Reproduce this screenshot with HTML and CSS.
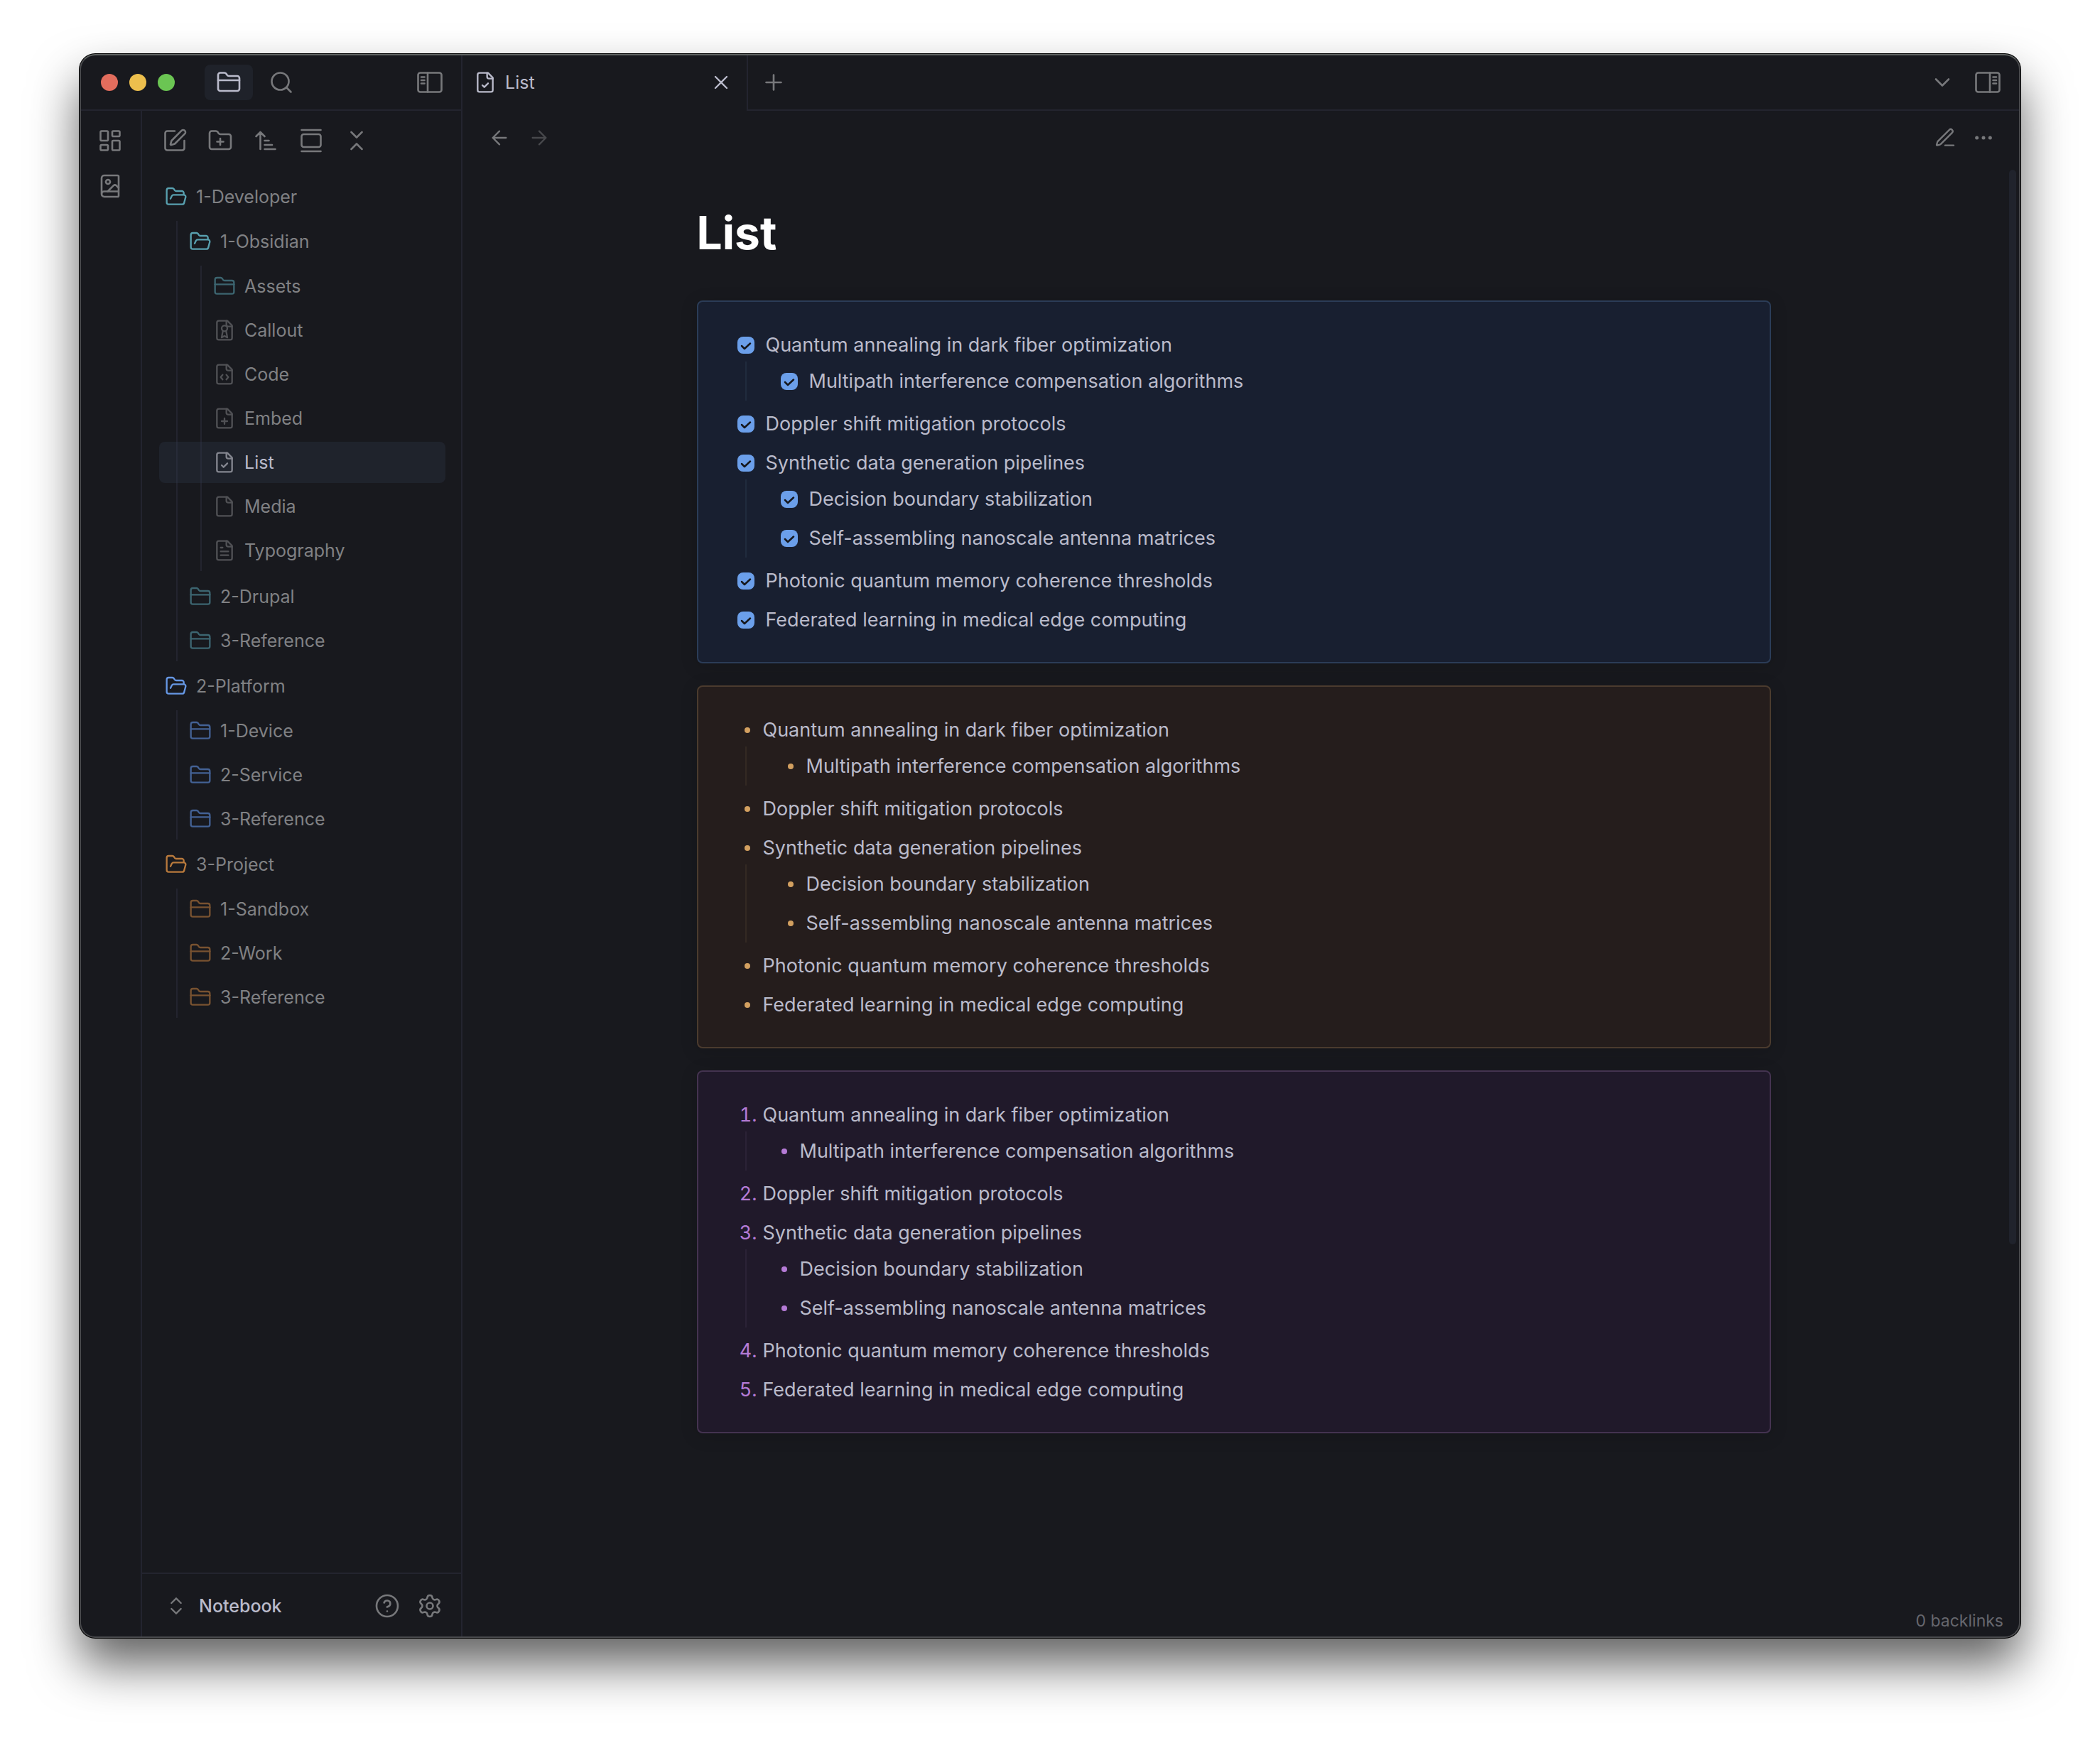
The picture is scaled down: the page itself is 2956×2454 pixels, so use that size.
FILE: index.html
```html
<!DOCTYPE html>
<html lang="en">
<head>
<meta charset="utf-8">
<meta name="viewport" content="width=device-width, initial-scale=1">
<title>List - Notebook</title>
<link rel="stylesheet" href="styles.css">
</head>
<body>
<svg class="sprite" aria-hidden="true">
  <symbol id="folder" viewBox="0 0 24 24"><path d="M20 20a2 2 0 0 0 2-2V8a2 2 0 0 0-2-2h-7.900a2 2 0 0 1-1.690-.900L9.600 3.900A2 2 0 0 0 7.930 3H4a2 2 0 0 0-2 2v13a2 2 0 0 0 2 2Z"/><path d="M2 10h20"/></symbol>
  <symbol id="folder-open" viewBox="0 0 24 24"><path d="m6 14 1.450-2.900A2 2 0 0 1 9.240 10H20a2 2 0 0 1 1.940 2.500l-1.550 6a2 2 0 0 1-1.940 1.500H4a2 2 0 0 1-2-2V5c0-1.100.900-2 2-2h3.930a2 2 0 0 1 1.660.900l.820 1.200a2 2 0 0 0 1.660.900H18a2 2 0 0 1 2 2v2"/></symbol>
  <symbol id="folder-plus" viewBox="0 0 24 24"><path d="M20 20a2 2 0 0 0 2-2V8a2 2 0 0 0-2-2h-7.900a2 2 0 0 1-1.690-.900L9.600 3.900A2 2 0 0 0 7.930 3H4a2 2 0 0 0-2 2v13a2 2 0 0 0 2 2Z"/><path d="M12 10v6M9 13h6"/></symbol>
  <symbol id="search" viewBox="0 0 24 24"><circle cx="11" cy="11" r="8"/><path d="m21 21-4.300-4.300"/></symbol>
  <symbol id="panel-left" viewBox="0 0 24 24"><rect x="1" y="3" width="22" height="18" rx="2"/><path d="M10 3v18M4 7h3M4 10h3M4 13h3"/></symbol>
  <symbol id="panel-right" viewBox="0 0 24 24"><rect x="1" y="3" width="22" height="18" rx="2"/><path d="M14 3v18M17 7h3M17 10h3M17 13h3"/></symbol>
  <symbol id="dashboard" viewBox="0 0 24 24"><rect width="7" height="9" x="3" y="3" rx="1"/><rect width="7" height="5" x="14" y="3" rx="1"/><rect width="7" height="9" x="14" y="12" rx="1"/><rect width="7" height="5" x="3" y="16" rx="1"/></symbol>
  <symbol id="book-image" viewBox="0 0 24 24"><path d="m20 13.700-2.100-2.100a2 2 0 0 0-2.800 0L9.700 17"/><path d="M4 19.500v-15A2.500 2.500 0 0 1 6.500 2H19a1 1 0 0 1 1 1v18a1 1 0 0 1-1 1H6.500a1 1 0 0 1 0-5H20"/><circle cx="10" cy="8" r="2"/></symbol>
  <symbol id="edit" viewBox="0 0 24 24"><path d="M12 3H5a2 2 0 0 0-2 2v14a2 2 0 0 0 2 2h14a2 2 0 0 0 2-2v-7"/><path d="M18.375 2.625a1 1 0 0 1 3 3l-9.013 9.014a2 2 0 0 1-.853.505l-2.873.840a.500.500 0 0 1-.620-.620l.840-2.873a2 2 0 0 1 .506-.852z"/></symbol>
  <symbol id="sort" viewBox="0 0 24 24"><path d="m3 8 4-4 4 4M7 4v16M11 12h4M11 16h7M11 20h10"/></symbol>
  <symbol id="gallery" viewBox="0 0 24 24"><path d="M3 2h18M3 22h18"/><rect width="18" height="12" x="3" y="6" rx="2"/></symbol>
  <symbol id="collapse" viewBox="0 0 24 24"><path d="m7 20 5-5 5 5M7 4l5 5 5-5"/></symbol>
  <symbol id="up-down" viewBox="0 0 24 24"><path d="m7 15 5 5 5-5M7 9l5-5 5 5"/></symbol>
  <symbol id="help" viewBox="0 0 24 24"><circle cx="12" cy="12" r="10"/><path d="M9.090 9a3 3 0 0 1 5.830 1c0 2-3 3-3 3M12 17h.010"/></symbol>
  <symbol id="gear" viewBox="0 0 24 24"><path d="M9.671 4.136a2.340 2.340 0 0 1 4.659 0 2.340 2.340 0 0 0 3.319 1.915 2.340 2.340 0 0 1 2.330 4.033 2.340 2.340 0 0 0 0 3.831 2.340 2.340 0 0 1-2.330 4.033 2.340 2.340 0 0 0-3.319 1.915 2.340 2.340 0 0 1-4.659 0 2.340 2.340 0 0 0-3.320-1.915 2.340 2.340 0 0 1-2.330-4.033 2.340 2.340 0 0 0 0-3.831A2.340 2.340 0 0 1 6.350 6.051a2.340 2.340 0 0 0 3.319-1.915"/><circle cx="12" cy="12" r="3"/></symbol>
  <symbol id="file" viewBox="0 0 24 24"><path d="M15 2H6a2 2 0 0 0-2 2v16a2 2 0 0 0 2 2h12a2 2 0 0 0 2-2V7Z"/><path d="M14 2v4a2 2 0 0 0 2 2h4"/></symbol>
  <symbol id="file-check" viewBox="0 0 24 24"><use href="#file"/><path d="m9 15 2 2 4-4"/></symbol>
  <symbol id="file-badge" viewBox="0 0 24 24"><use href="#file"/><circle cx="12" cy="10" r="3"/><path d="m10.300 12.600-1.300 7 3-1.600 3 1.600-1.300-7"/></symbol>
  <symbol id="file-code" viewBox="0 0 24 24"><use href="#file"/><path d="M10 12.500 8 15l2 2.500M14 12.500l2 2.500-2 2.500"/></symbol>
  <symbol id="file-plus" viewBox="0 0 24 24"><use href="#file"/><path d="M9 15h6M12 18v-6"/></symbol>
  <symbol id="file-text" viewBox="0 0 24 24"><use href="#file"/><path d="M10 9H8M16 13H8M16 17H8"/></symbol>
  <symbol id="close" viewBox="0 0 24 24"><path d="M18 6 6 18M6 6l12 12"/></symbol>
  <symbol id="plus" viewBox="0 0 24 24"><path d="M5 12h14M12 5v14"/></symbol>
  <symbol id="chevron-down" viewBox="0 0 24 24"><path d="m6 9 6 6 6-6"/></symbol>
  <symbol id="arrow-left" viewBox="0 0 24 24"><path d="m12 19-7-7 7-7M19 12H5"/></symbol>
  <symbol id="arrow-right" viewBox="0 0 24 24"><path d="M5 12h14M12 5l7 7-7 7"/></symbol>
  <symbol id="pen-line" viewBox="0 0 24 24"><path d="M12 20h9"/><path d="M16.376 3.622a1 1 0 0 1 3.002 3.002L7.368 18.635a2 2 0 0 1-.855.506l-2.872.838a.500.500 0 0 1-.620-.620l.838-2.872a2 2 0 0 1 .506-.854z"/></symbol>
  <symbol id="more" viewBox="0 0 24 24"><circle cx="12" cy="12" r="1"/><circle cx="19" cy="12" r="1"/><circle cx="5" cy="12" r="1"/></symbol>
</svg>

<div class="window">
  <aside class="sidebar">
    <header class="sidebar-head">
      <div class="lights"><span class="light red"></span><span class="light yellow"></span><span class="light green"></span></div>
      <button class="side-tab active" aria-label="Files"><svg class="icon"><use href="#folder"/></svg></button>
      <button class="side-tab" aria-label="Search"><svg class="icon"><use href="#search"/></svg></button>
      <button class="push" aria-label="Collapse sidebar"><svg class="icon"><use href="#panel-left"/></svg></button>
    </header>
    <div class="sidebar-body">
      <nav class="ribbon" aria-label="Ribbon">
        <button aria-label="Dashboard"><svg class="icon"><use href="#dashboard"/></svg></button>
        <button aria-label="Gallery"><svg class="icon"><use href="#book-image"/></svg></button>
      </nav>
      <div class="files">
        <div class="toolbar">
          <button aria-label="New note"><svg class="icon"><use href="#edit"/></svg></button>
          <button aria-label="New folder"><svg class="icon"><use href="#folder-plus"/></svg></button>
          <button aria-label="Sort order"><svg class="icon"><use href="#sort"/></svg></button>
          <button aria-label="Reveal current file"><svg class="icon"><use href="#gallery"/></svg></button>
          <button aria-label="Collapse all"><svg class="icon"><use href="#collapse"/></svg></button>
        </div>
        <ul class="tree">
          <li class="teal"><a class="row open" href="#"><svg class="icon small"><use href="#folder-open"/></svg>1-Developer</a>
            <ul class="level-1">
              <li><a class="row open" href="#"><svg class="icon small"><use href="#folder-open"/></svg>1-Obsidian</a>
                <ul class="level-2">
                  <li><a class="row closed" href="#"><svg class="icon small"><use href="#folder"/></svg>Assets</a></li>
                  <li><a class="row" href="#"><svg class="icon small"><use href="#file-badge"/></svg>Callout</a></li>
                  <li><a class="row" href="#"><svg class="icon small"><use href="#file-code"/></svg>Code</a></li>
                  <li><a class="row" href="#"><svg class="icon small"><use href="#file-plus"/></svg>Embed</a></li>
                  <li><a class="row selected" href="#" aria-current="page"><svg class="icon small"><use href="#file-check"/></svg>List</a></li>
                  <li><a class="row" href="#"><svg class="icon small"><use href="#file"/></svg>Media</a></li>
                  <li><a class="row" href="#"><svg class="icon small"><use href="#file-text"/></svg>Typography</a></li>
                </ul>
              </li>
              <li><a class="row closed" href="#"><svg class="icon small"><use href="#folder"/></svg>2-Drupal</a></li>
              <li><a class="row closed" href="#"><svg class="icon small"><use href="#folder"/></svg>3-Reference</a></li>
            </ul>
          </li>
          <li class="blue"><a class="row open" href="#"><svg class="icon small"><use href="#folder-open"/></svg>2-Platform</a>
            <ul class="level-1">
              <li><a class="row closed" href="#"><svg class="icon small"><use href="#folder"/></svg>1-Device</a></li>
              <li><a class="row closed" href="#"><svg class="icon small"><use href="#folder"/></svg>2-Service</a></li>
              <li><a class="row closed" href="#"><svg class="icon small"><use href="#folder"/></svg>3-Reference</a></li>
            </ul>
          </li>
          <li class="orange"><a class="row open" href="#"><svg class="icon small"><use href="#folder-open"/></svg>3-Project</a>
            <ul class="level-1">
              <li><a class="row closed" href="#"><svg class="icon small"><use href="#folder"/></svg>1-Sandbox</a></li>
              <li><a class="row closed" href="#"><svg class="icon small"><use href="#folder"/></svg>2-Work</a></li>
              <li><a class="row closed" href="#"><svg class="icon small"><use href="#folder"/></svg>3-Reference</a></li>
            </ul>
          </li>
        </ul>
        <footer class="vault">
          <button class="vault-name"><svg class="icon small"><use href="#up-down"/></svg>Notebook</button>
          <button class="push" aria-label="Help"><svg class="icon"><use href="#help"/></svg></button>
          <button aria-label="Settings"><svg class="icon"><use href="#gear"/></svg></button>
        </footer>
      </div>
    </div>
  </aside>

  <main class="main">
    <header class="tabs">
      <div class="tab"><svg class="icon small"><use href="#file-check"/></svg><span>List</span><button class="push" aria-label="Close tab"><svg class="icon small"><use href="#close"/></svg></button></div>
      <div class="tabs-rest">
        <button aria-label="New tab"><svg class="icon"><use href="#plus"/></svg></button>
        <button class="push" aria-label="Tab list"><svg class="icon"><use href="#chevron-down"/></svg></button>
        <button aria-label="Expand sidebar"><svg class="icon"><use href="#panel-right"/></svg></button>
      </div>
    </header>
    <div class="view-head">
      <button aria-label="Back"><svg class="icon small"><use href="#arrow-left"/></svg></button>
      <button class="dim" aria-label="Forward"><svg class="icon small"><use href="#arrow-right"/></svg></button>
      <button class="push" aria-label="Edit"><svg class="icon small"><use href="#pen-line"/></svg></button>
      <button aria-label="More options"><svg class="icon small"><use href="#more"/></svg></button>
    </div>
    <div class="view">
      <article class="note">
        <h1>List</h1>
        <section class="card card-blue">
          <ul class="list">
            <li><label class="item"><input type="checkbox" checked>Quantum annealing in dark fiber optimization</label>
              <ul class="nested">
                <li><label class="item"><input type="checkbox" checked>Multipath interference compensation algorithms</label></li>
              </ul>
            </li>
            <li><label class="item"><input type="checkbox" checked>Doppler shift mitigation protocols</label></li>
            <li><label class="item"><input type="checkbox" checked>Synthetic data generation pipelines</label>
              <ul class="nested">
                <li><label class="item"><input type="checkbox" checked>Decision boundary stabilization</label></li>
                <li><label class="item"><input type="checkbox" checked>Self-assembling nanoscale antenna matrices</label></li>
              </ul>
            </li>
            <li><label class="item"><input type="checkbox" checked>Photonic quantum memory coherence thresholds</label></li>
            <li><label class="item"><input type="checkbox" checked>Federated learning in medical edge computing</label></li>
          </ul>
        </section>
        <section class="card card-orange">
          <ul class="list">
            <li><div class="item"><span class="bullet"></span>Quantum annealing in dark fiber optimization</div>
              <ul class="nested">
                <li><div class="item"><span class="bullet"></span>Multipath interference compensation algorithms</div></li>
              </ul>
            </li>
            <li><div class="item"><span class="bullet"></span>Doppler shift mitigation protocols</div></li>
            <li><div class="item"><span class="bullet"></span>Synthetic data generation pipelines</div>
              <ul class="nested">
                <li><div class="item"><span class="bullet"></span>Decision boundary stabilization</div></li>
                <li><div class="item"><span class="bullet"></span>Self-assembling nanoscale antenna matrices</div></li>
              </ul>
            </li>
            <li><div class="item"><span class="bullet"></span>Photonic quantum memory coherence thresholds</div></li>
            <li><div class="item"><span class="bullet"></span>Federated learning in medical edge computing</div></li>
          </ul>
        </section>
        <section class="card card-purple">
          <ol class="list">
            <li><div class="item"><span class="number">1.</span>Quantum annealing in dark fiber optimization</div>
              <ul class="nested">
                <li><div class="item"><span class="bullet"></span>Multipath interference compensation algorithms</div></li>
              </ul>
            </li>
            <li><div class="item"><span class="number">2.</span>Doppler shift mitigation protocols</div></li>
            <li><div class="item"><span class="number">3.</span>Synthetic data generation pipelines</div>
              <ul class="nested">
                <li><div class="item"><span class="bullet"></span>Decision boundary stabilization</div></li>
                <li><div class="item"><span class="bullet"></span>Self-assembling nanoscale antenna matrices</div></li>
              </ul>
            </li>
            <li><div class="item"><span class="number">4.</span>Photonic quantum memory coherence thresholds</div></li>
            <li><div class="item"><span class="number">5.</span>Federated learning in medical edge computing</div></li>
          </ol>
        </section>
      </article>
      <div class="track"><div class="thumb"></div></div>
    </div>
    <footer class="status">0 backlinks</footer>
  </main>
</div>
</body>
</html>
```
FILE: styles.css
```css
:root {
  --bg: #18191e;
  --line: #23242f;
  --hover: rgba(52, 62, 82, 0.28);
  --text: #babbcb;
  --muted: #808184;
  --icon: #77787b;
}

* { box-sizing: border-box; }

body {
  margin: 0;
  min-height: 100vh;
  padding: 76px 112px 148px;
  display: flex;
  background: #fff;
  color: var(--text);
  font-family: Inter, "Liberation Sans", sans-serif;
  font-size: 25px;
}

ul, ol { list-style: none; margin: 0; padding: 0; }
a { color: inherit; text-decoration: none; }

button {
  display: flex;
  align-items: center;
  justify-content: center;
  padding: 0;
  border: 0;
  background: none;
  color: var(--icon);
  font: inherit;
}

.sprite { display: none; }

.icon {
  flex: none;
  width: 36px;
  height: 36px;
  fill: none;
  stroke: currentColor;
  stroke-width: 1.75;
  stroke-linecap: round;
  stroke-linejoin: round;
}
.icon.small { width: 32px; height: 32px; }
.push { margin-left: auto; }

.window {
  flex: 1;
  display: flex;
  overflow: hidden;
  background: var(--bg);
  border: 2px solid #48494c;
  border-top-color: #5c605f;
  border-radius: 22px;
  box-shadow: 0 0 0 1px #000, 0 38px 68px rgba(0, 0, 0, 0.62);
}

/* Sidebar */
.sidebar {
  width: 537px;
  display: flex;
  flex-direction: column;
  border-right: 2px solid var(--line);
}
.sidebar-head {
  display: flex;
  align-items: center;
  height: 78px;
  padding: 0 26px 0 28px;
  border-bottom: 2px solid var(--line);
}
.lights { display: flex; gap: 16px; margin-right: 42px; }
.light { width: 24px; height: 24px; border-radius: 50%; }
.red { background: #e26d5d; }
.yellow { background: #edbf4d; }
.green { background: #6bc553; }
.side-tab { width: 68px; height: 50px; margin-right: 6px; border-radius: 8px; }
.side-tab.active { background: #1f222a; color: var(--text); }

.sidebar-body { flex: 1; display: flex; }
.ribbon {
  width: 86px;
  display: flex;
  flex-direction: column;
  align-items: center;
  gap: 28px;
  padding: 24px 2px 0 0;
  border-right: 2px solid var(--line);
}
.files { flex: 1; display: flex; flex-direction: column; }
.toolbar { display: flex; gap: 28px; padding: 24px 28px 32px; }

.tree { flex: 1; padding: 0 22px 0 24px; }
.tree li + li { margin-top: 4px; }
.tree ul {
  margin: 5px 0;
  background: linear-gradient(var(--line), var(--line)) no-repeat 24px 0 / 2px 100%;
}
.tree ul.level-2 { margin-bottom: 7px; background-position-x: 58px; }
.row {
  display: flex;
  align-items: center;
  gap: 12px;
  height: 58px;
  padding-left: 8px;
  border-radius: 8px;
  color: var(--muted);
}
.level-1 .row { padding-left: 42px; }
.level-2 .row { padding-left: 76px; }
.row .icon { color: #505155; }
.row.selected { background: var(--hover); color: var(--text); }
.row.selected .icon { color: #84868f; }
.teal .open .icon { color: #58a0af; }
.teal .closed .icon { color: #3c6570; }
.blue .open .icon { color: #6697e4; }
.blue .closed .icon { color: #436194; }
.orange .open .icon { color: #b8793c; }
.orange .closed .icon { color: #785230; }
.tree > li + li { margin-top: 6px; }

.vault {
  display: flex;
  align-items: center;
  gap: 24px;
  height: 90px;
  padding: 2px 26px 0 32px;
  border-top: 2px solid var(--line);
}
.vault-name { gap: 16px; color: var(--text); font-weight: 500; }
.vault-name .icon { color: var(--icon); }

/* Main pane */
.main { flex: 1; display: flex; flex-direction: column; min-width: 0; }
.tabs { display: flex; height: 78px; }
.tab {
  width: 402px;
  display: flex;
  align-items: center;
  gap: 12px;
  padding: 0 20px 2px 16px;
  border-right: 2px solid var(--line);
}
.tab button { color: var(--text); }
.tabs-rest {
  flex: 1;
  display: flex;
  align-items: center;
  gap: 28px;
  padding: 0 26px 0 18px;
  border-bottom: 2px solid var(--line);
}
.view-head { display: flex; gap: 24px; padding: 22px 34px 28px 36px; }
.view-head .push { margin-right: -2px; }
.dim { opacity: 0.5; }

.view { flex: 1; display: flex; }
.note {
  flex: 1;
  max-width: 1512px;
  margin: 0 auto;
  padding-top: 50px;
}
h1 {
  margin: 0 0 55px;
  color: #fff;
  font-size: 64px;
  font-weight: 700;
  line-height: 80px;
}
.track { width: 20px; padding: 1px 4px 0 6px; }
.thumb { height: 75%; border-radius: 5px; background: #20232c; }

.card {
  margin-bottom: 31px;
  padding: 33px 55px 32px;
  border: 2px solid;
  border-radius: 8px;
  box-shadow: 0 4px 24px rgba(0, 0, 0, 0.15);
  font-size: 27px;
  line-height: 45px;
}
.card-blue { background: #181f30; border-color: #2b3c57; --accent: #6b9fea; --guide: #202b3d; }
.card-orange { background: #251d1c; border-color: #4b3b2e; --accent: #d3a060; --guide: #332922; }
.card-purple { background: #20192a; border-color: #443350; --accent: #b57bd6; --guide: #2b2236; }

.list li { padding: 5px 0; }
.item { display: flex; align-items: center; }
.nested { margin: 1px 0 0 11px; padding-left: 48px; border-left: 2px solid var(--guide); }
.card-purple .nested { padding-left: 39px; }

.item input {
  appearance: none;
  flex: none;
  width: 24px;
  height: 24px;
  margin: 0 16px 0 0;
  border-radius: 8px;
  background: var(--accent) url("data:image/svg+xml,%3Csvg xmlns='http://www.w3.org/2000/svg' viewBox='0 0 24 24' fill='none' stroke='%2315171c' stroke-width='2.500' stroke-linecap='round' stroke-linejoin='round'%3E%3Cpath d='m6 13 4 4 8-7.500'/%3E%3C/svg%3E") center / contain;
}
.bullet {
  flex: none;
  width: 8px;
  height: 8px;
  margin: 0 18px 0 10px;
  border-radius: 50%;
  background: var(--accent);
}
.number {
  flex: none;
  width: 28px;
  margin-right: 8px;
  color: var(--accent);
  font-variant-numeric: tabular-nums;
  text-align: right;
}

.status {
  align-self: flex-end;
  padding: 10px 22px 6px;
  color: #66676e;
  font-size: 23px;
  line-height: 32px;
}
```
